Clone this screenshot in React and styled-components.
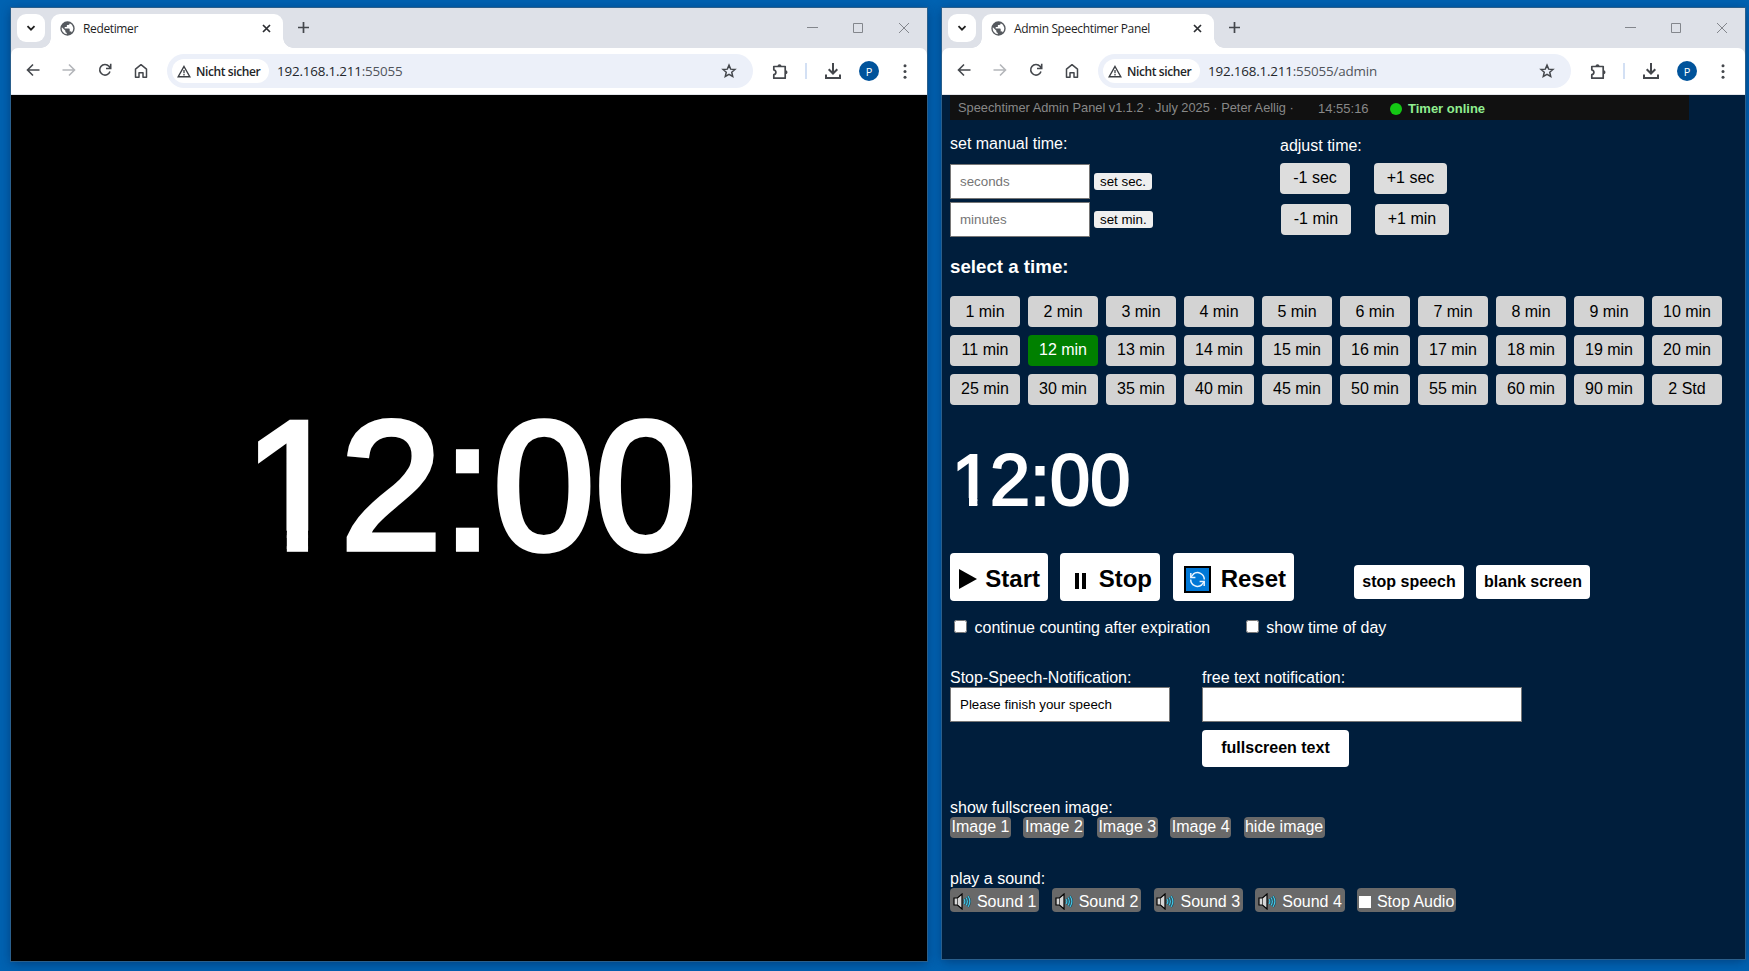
import React from "react";
import styled, { createGlobalStyle, css } from "styled-components";

const Global = createGlobalStyle`
  html, body { margin: 0; padding: 0; }
  body { overflow: hidden; font-family: "Liberation Sans", Arial, sans-serif; }
  *, *::before, *::after { box-sizing: border-box; }
  button, input { font-family: inherit; margin: 0; }
  svg { display: block; flex: none; }
`;

const uiFont = css`font-family: "Open Sans", "Noto Sans", sans-serif;`;

/* ---------- desktop and windows ---------- */

const Desktop = styled.main`
  position: relative;
  width: 1749px;
  height: 971px;
  background: #0062b1;
  overflow: hidden;
`;

const Window = styled.section`
  position: absolute;
  left: ${(p) => p.$left}px;
  top: 8px;
  width: ${(p) => p.$width}px;
  height: ${(p) => p.$height}px;
  display: flex;
  flex-direction: column;
  box-shadow: 0 0 0 1px #2a5f8c, 0 2px 10px rgba(0, 20, 60, 0.45);
`;

const TabStrip = styled.header`
  display: flex;
  height: 40px;
  flex: none;
  padding: 6px 0 0 6px;
  background: #dee1e8;
`;

const TabSearch = styled.button`
  width: 28px;
  height: 28px;
  flex: none;
  display: grid;
  place-items: center;
  padding: 0;
  border: 0;
  border-radius: 9px;
  background: #fff;
`;

const Tab = styled.div`
  position: relative;
  display: flex;
  align-items: center;
  width: 232px;
  height: 34px;
  margin-left: 6px;
  padding: 0 12px 6px 9px;
  border-radius: 9px 9px 0 0;
  background: #fff;
  ${uiFont}
  font-size: 12px;
  color: #1f1f1f;
  &::before, &::after {
    content: "";
    position: absolute;
    bottom: 0;
    width: 10px;
    height: 10px;
  }
  &::before { left: -10px; background: radial-gradient(circle at 0 0, transparent 9.5px, #fff 10px); }
  &::after { right: -10px; background: radial-gradient(circle at 100% 0, transparent 9.5px, #fff 10px); }
`;

const TabTitle = styled.span`
  flex: 1;
  margin-left: 8px;
  line-height: 17px;
  white-space: nowrap;
  letter-spacing: -0.36px;
`;

const NewTab = styled.div`
  margin: 8px 0 0 14.5px;
`;

const WindowControls = styled.div`
  display: flex;
  gap: 34px;
  margin: 8px 17px 0 auto;
`;

const Toolbar = styled.nav`
  display: flex;
  align-items: center;
  height: 47px;
  padding: 0 20.5px 0 15px;
  background: #fff;
  border-radius: 7px 7px 0 0;
  border-bottom: 1px solid #e3e5ea;
`;

const ToolbarHolder = styled.div`
  background: #dee1e8;
  flex: none;
`;

const NavIcons = styled.div`
  display: flex;
  gap: 22px;
`;

const AddressBar = styled.div`
  display: flex;
  align-items: center;
  flex: 1;
  height: 34px;
  margin: 0 19px 0 19px;
  padding: 0 16px 0 5px;
  border-radius: 17px;
  background: #ecf0f9;
`;

const SecurityChip = styled.span`
  display: flex;
  align-items: center;
  width: 97px;
  height: 24px;
  padding-left: 5px;
  border-radius: 12px;
  background: #fff;
  ${uiFont}
  font-size: 12px;
  font-weight: 600;
  letter-spacing: -0.4px;
  color: #222427;
  white-space: nowrap;
  gap: 5px;
`;

const Address = styled.span`
  flex: 1;
  margin-left: 8px;
  ${uiFont}
  font-size: 13.4px;
  letter-spacing: -0.18px;
  color: #23262b;
  white-space: nowrap;
`;

const AddressPart = styled.span`
  color: #50545b;
`;

const ToolbarDivider = styled.span`
  width: 2px;
  height: 16px;
  margin: 0 18px 0 16px;
  background: #d3e0f4;
`;

const Avatar = styled.span`
  display: grid;
  place-items: center;
  width: 20px;
  height: 20px;
  margin: 0 23.5px 0 18px;
  border-radius: 50%;
  background: #00539b;
  color: #fff;
  ${uiFont}
  font-size: 11px;
`;

/* ---------- clock digits ---------- */

const ClockDigits = styled.div`
  font-size: ${(p) => p.$size}px;
  line-height: 1.15;
  white-space: nowrap;
  color: #fff;
  -webkit-text-stroke: 0.03em #fff;
`;

/* A "1" without its foot: only the flag and the stem stay visible. */
const FootlessOne = styled.span`
  display: inline-block;
  margin: 0 -0.026em 0 0.026em;
  clip-path: polygon(
    0 0, 100% 0, 100% 0.82em, 0.354em 0.82em, 0.354em 100%, 0.238em 100%, 0.238em 0.82em, 0 0.82em
  );
`;

/* ---------- speech display ---------- */

const Display = styled.div`
  flex: 1;
  display: flex;
  align-items: center;
  justify-content: center;
  padding: 0 3px 84px 0;
  background: #000;
`;

/* ---------- admin panel ---------- */

const Panel = styled.div`
  flex: 1;
  display: flex;
  flex-direction: column;
  align-items: flex-start;
  padding-left: 8px;
  background: #001e3c;
  color: #fff;
  font-size: 16px;
  line-height: 18px;
  white-space: nowrap;
`;

const StatusBar = styled.div`
  display: flex;
  align-items: center;
  width: 739px;
  height: 25px;
  padding: 0 8px;
  background: #111;
  color: #888;
  font-size: 13px;
`;

const VersionText = styled.span`
  width: 360px;
  padding-top: 1px;
  font-size: 12.8px;
`;

const Clock = styled.span`
  width: 72px;
  padding-top: 2px;
`;

const OnlineStatus = styled.span`
  display: flex;
  align-items: center;
  gap: 6px;
  padding-top: 2px;
  font-weight: bold;
  color: #90ee90;
  &::before {
    content: "";
    width: 12px;
    height: 12px;
    border-radius: 50%;
    background: #14c814;
  }
`;

const TimeSettings = styled.div`
  display: flex;
  height: 117px;
`;

const ManualTime = styled.div`
  width: 330px;
  padding-top: 15px;
`;

const ManualRow = styled.div`
  display: flex;
  align-items: center;
  gap: 4px;
  margin-top: ${(p) => p.$top}px;
`;

const TextInput = styled.input`
  display: block;
  width: ${(p) => p.$width}px;
  height: 35px;
  padding: 1px 9px;
  border: 1px solid #767676;
  border-radius: 0;
  background: #fff;
  color: #000;
  font-size: 13.33px;
  outline: 0;
  &::placeholder { color: #757575; }
`;

const SetButton = styled.button`
  height: 17px;
  padding: 0 6px;
  border: 0;
  border-radius: 3px;
  background: #efefef;
  color: #000;
  font-size: 13.33px;
  line-height: 17px;
`;

const AdjustTime = styled.div`
  padding-top: 17px;
`;

const AdjustRow = styled.div`
  display: flex;
  gap: 24px;
  margin: ${(p) => (p.$second ? "10px 0 0 1px" : "8px 0 0 0")};
`;

const AdjustButton = styled.button`
  width: ${(p) => p.$width}px;
  height: 31px;
  padding: 0 0 2px;
  border: 0;
  border-radius: 4px;
  background: #ddd;
  color: #000;
  font-size: 16px;
`;

const SectionTitle = styled.h3`
  margin: 19px 0 18px;
  font-size: 18.72px;
  line-height: 22px;
`;

const PresetGrid = styled.div`
  display: grid;
  grid-template-columns: repeat(10, 70px);
  grid-auto-rows: 31px;
  gap: 8px;
`;

const Preset = styled.button`
  padding: 0 0 1px;
  border: 0;
  border-radius: 4px;
  background: ${(p) => (p.$active ? "#008000" : "#d3d3d3")};
  color: ${(p) => (p.$active ? "#fff" : "#000")};
  font-size: 16px;
  &:nth-child(-n + 10) { padding: 1px 0 0; }
`;

const PanelTime = styled.div`
  height: 82px;
  margin-top: 34px;
`;

const ControlRow = styled.div`
  display: flex;
  margin-top: 32px;
`;

const MainButton = styled.button`
  display: flex;
  align-items: center;
  justify-content: space-between;
  width: ${(p) => p.$width}px;
  height: 48px;
  margin-right: ${(p) => p.$after}px;
  padding: 4px 8px 0 ${(p) => p.$pad}px;
  border: 0;
  border-radius: 4px;
  background: #fff;
  color: #000;
  font-size: 24px;
  font-weight: bold;
`;

const BoldButton = styled.button`
  width: ${(p) => p.$width}px;
  height: ${(p) => p.$height}px;
  margin: ${(p) => p.$margin};
  padding: 0 0 1px;
  border: 0;
  border-radius: 4px;
  background: #fff;
  color: #000;
  font-size: 16px;
  font-weight: bold;
`;

const OptionRow = styled.div`
  display: flex;
  gap: 35.5px;
  margin: 18px 0 0 4px;
`;

const Option = styled.label`
  display: flex;
  align-items: flex-start;
`;

const Checkbox = styled.input`
  width: 13px;
  height: 13px;
  margin: 1px 7.5px 0 0;
`;

const MessageRow = styled.div`
  display: flex;
  gap: 32px;
  margin-top: 32px;
`;

const MessageField = styled.div`
  display: flex;
  flex-direction: column;
  align-items: flex-start;
`;

const MediaGroup = styled.div`
  margin-top: 32px;
`;

const MediaButtons = styled.div`
  display: flex;
  gap: 12.4px;
`;

const MediaButton = styled.button`
  display: flex;
  align-items: center;
  justify-content: center;
  gap: 6px;
  width: ${(p) => p.$width}px;
  height: ${(p) => (p.$tall ? 24 : 21)}px;
  padding: ${(p) => (p.$tall ? "3px 0 0" : "0 0 2px")};
  border: 0;
  border-radius: 4px;
  background: #696969;
  color: #fff;
  font-size: 16px;
  line-height: 18px;
  white-space: nowrap;
`;

/* ---------- icons ---------- */

const Stroke = ({ size = 14, w = 1.6, color = "#44474c", d, box = 14 }) => (
  <svg width={size} height={size} viewBox={`0 0 ${box} ${box}`} fill="none" stroke={color} strokeWidth={w}>
    <path d={d} />
  </svg>
);

const Globe = () => (
  <svg width="15" height="15" viewBox="0 0 24 24" fill="#55595e">
    <path d="M12 .5a11.500 11.500 0 1 0 0 23 11.500 11.500 0 0 0 0-23zm-1.200 20.700A9.300 9.300 0 0 1 3 9.800l5.600 5.600v1.200c0 1.300 1 2.300 2.200 2.300zm8-3a2.300 2.300 0 0 0-2.200-1.600h-1.100v-3.400c0-.7-.5-1.200-1.200-1.200H7.500V9.700h2.300c.7 0 1.200-.5 1.200-1.100V6.300h2.300c1.200 0 2.200-1 2.200-2.300v-.6a9.300 9.300 0 0 1 3.300 14.800z" />
  </svg>
);

const Home = () => (
  <svg width="14" height="16" viewBox="0 0 14 16" fill="none" stroke="#44474c" strokeWidth="1.500" strokeLinejoin="round">
    <path d="M1.500 6.200 7 1.700l5.500 4.500v8h-3.500v-4.500H5v4.500H1.500z" />
  </svg>
);

const Warning = () => (
  <svg width="14" height="13" viewBox="0 0 14 13" fill="none" stroke="#3b3e43" strokeWidth="1.400">
    <path d="M7 1.500 12.800 11.700H1.200z" />
    <path d="M7 5v3.200M7 9.100v1.300" strokeWidth="1.300" />
  </svg>
);

const Star = () => (
  <svg width="16" height="16" viewBox="0 0 24 24" fill="none" stroke="#44474c" strokeWidth="2.200">
    <path d="M12 3.200l2.500 6 6.500.5-4.900 4.200 1.500 6.300L12 16.900l-5.600 3.300 1.500-6.300L3 9.700l6.500-.5z" />
  </svg>
);

const Puzzle = () => (
  <svg width="17" height="17" viewBox="0 0 17 17" fill="none">
    <path d="M1.800 3.500h11.400v11.700H1.800v-3.500c2.800-.2 2.800-4.500 0-4.700z" stroke="#44474c" strokeWidth="1.700" strokeLinejoin="round" />
    <path d="M5.500 3.200a2 2 0 0 1 4 0zM13.500 7.300a2 2 0 0 1 0 4z" fill="#44474c" />
  </svg>
);

const Download = () => (
  <svg width="16" height="16" viewBox="0 0 16 16" fill="none" stroke="#44474c" strokeWidth="2">
    <path d="M8 0v10M3.700 6.200 8 10.500l4.300-4.300M1 11.500V15h14v-3.500" />
  </svg>
);

const Dots = () => (
  <svg width="4" height="15" viewBox="0 0 4 15" fill="#44474c">
    <circle cx="2" cy="1.800" r="1.500" /><circle cx="2" cy="7.500" r="1.500" /><circle cx="2" cy="13.200" r="1.500" />
  </svg>
);

const PlayGlyph = () => (
  <svg width="18" height="20" viewBox="0 0 18 20"><path d="M0 0 18 10 0 20z" /></svg>
);

const PauseGlyph = () => (
  <svg width="11" height="20" viewBox="0 0 11 20"><path d="M0 4h4v16H0zM7 4h4v16H7z" /></svg>
);

const ResetGlyph = () => (
  <svg width="27" height="27" viewBox="0 0 27 27">
    <rect width="27" height="27" />
    <rect x="2" y="2" width="23" height="23" fill="#0078d7" />
    <g fill="none" stroke="#e9f4ff" strokeWidth="1.500">
      <path d="M9.200 8.200a6.800 6.800 0 0 1 11.100 5.300M17.800 18.800a6.800 6.800 0 0 1-11.100-5.300" />
      <path d="M6.800 7v4.400h4.600M20.200 20v-4.400h-4.600" />
      <path d="M6.800 11.400 9.600 7.900M20.200 15.600l-2.800 3.500" />
    </g>
  </svg>
);

const SpeakerGlyph = () => (
  <svg width="18" height="17" viewBox="0 0 18 17" fill="none">
    <path d="M1 5h3.500L9 1v15l-4.500-4H1z" fill="#d6d6d6" stroke="#000" strokeWidth="1.200" />
    <path d="M4.500 5v7" stroke="#333" strokeWidth=".8" />
    <path d="M11 6q1.700 2.500 0 5M13 4.500q2.700 4 0 8M15 3q3.700 5.500 0 11" stroke="#0c3a4a" strokeWidth="2" />
    <path d="M11 6q1.700 2.500 0 5M13 4.500q2.700 4 0 8M15 3q3.700 5.500 0 11" stroke="#48c8e8" strokeWidth="1.200" />
  </svg>
);

const StopGlyph = () => (
  <svg width="12" height="12" viewBox="0 0 12 12"><rect width="12" height="12" fill="#fff" /></svg>
);

/* ---------- page ---------- */

function BrowserWindow({ left, width, height, title, path, children }) {
  return (
    <Window $left={left} $width={width} $height={height}>
      <TabStrip>
        <TabSearch><Stroke size={10} box={10} w={1.8} color="#1f1f1f" d="M1.500 3.200 5 6.700l3.500-3.500" /></TabSearch>
        <Tab>
          <Globe />
          <TabTitle>{title}</TabTitle>
          <Stroke size={9} box={9} w={1.7} color="#2b2d31" d="M1 1l7 7M8 1l-7 7" />
        </Tab>
        <NewTab><Stroke size={11} box={11} w={1.7} d="M5.500 0v11M0 5.500h11" /></NewTab>
        <WindowControls>
          <Stroke size={12} box={12} w={1} color="#83868c" d="M1 5.500h11" />
          <Stroke size={12} box={12} w={1} color="#83868c" d="M1.500 1.500h9v9h-9z" />
          <Stroke size={12} box={12} w={1} color="#83868c" d="M1 1l10 10M11 1 1 11" />
        </WindowControls>
      </TabStrip>
      <ToolbarHolder>
        <Toolbar>
          <NavIcons>
            <Stroke d="M13.500 7H2M7 1.500 1.500 7 7 12.500" />
            <Stroke color="#b4b6ba" d="M.5 7H12M7 1.500 12.500 7 7 12.500" />
            <Stroke d="M12 8.500A5.300 5.300 0 1 1 11 3.300L12.300 5M12.700 .8v4.700H8" />
            <Home />
          </NavIcons>
          <AddressBar>
            <SecurityChip><Warning />Nicht sicher</SecurityChip>
            <Address>192.168.1.211<AddressPart>:55055{path}</AddressPart></Address>
            <Star />
          </AddressBar>
          <Puzzle />
          <ToolbarDivider />
          <Download />
          <Avatar>P</Avatar>
          <Dots />
        </Toolbar>
      </ToolbarHolder>
      {children}
    </Window>
  );
}

const TwelveMinutes = ({ size }) => (
  <ClockDigits $size={size}><FootlessOne>1</FootlessOne>2:00</ClockDigits>
);

const presets = [
  ...Array.from({ length: 20 }, (_, i) => `${i + 1} min`),
  "25 min", "30 min", "35 min", "40 min", "45 min", "50 min", "55 min", "60 min", "90 min", "2 Std",
];

export default function App() {
  return (
    <Desktop>
      <Global />
      <BrowserWindow left={11} width={916} height={953} title="Redetimer" path="">
        <Display><TwelveMinutes size={183} /></Display>
      </BrowserWindow>

      <BrowserWindow left={942} width={803} height={951} title="Admin Speechtimer Panel" path="/admin">
        <Panel>
          <StatusBar>
            <VersionText>Speechtimer Admin Panel v1.1.2 · July 2025 · Peter Aellig ·</VersionText>
            <Clock>14:55:16</Clock>
            <OnlineStatus>Timer online</OnlineStatus>
          </StatusBar>

          <TimeSettings>
            <ManualTime>
              set manual time:
              <ManualRow $top={11}>
                <TextInput $width={140} placeholder="seconds" />
                <SetButton>set sec.</SetButton>
              </ManualRow>
              <ManualRow $top={3}>
                <TextInput $width={140} placeholder="minutes" />
                <SetButton>set min.</SetButton>
              </ManualRow>
            </ManualTime>
            <AdjustTime>
              adjust time:
              <AdjustRow>
                <AdjustButton $width={70}>-1 sec</AdjustButton>
                <AdjustButton $width={73}>+1 sec</AdjustButton>
              </AdjustRow>
              <AdjustRow $second>
                <AdjustButton $width={70}>-1 min</AdjustButton>
                <AdjustButton $width={74}>+1 min</AdjustButton>
              </AdjustRow>
            </AdjustTime>
          </TimeSettings>

          <SectionTitle>select a time:</SectionTitle>
          <PresetGrid>
            {presets.map((label) => (
              <Preset key={label} $active={label === "12 min"}>{label}</Preset>
            ))}
          </PresetGrid>

          <PanelTime><TwelveMinutes size={72} /></PanelTime>

          <ControlRow>
            <MainButton $width={98} $pad={9} $after={12}><PlayGlyph />Start</MainButton>
            <MainButton $width={100} $pad={15} $after={13}><PauseGlyph />Stop</MainButton>
            <MainButton $width={121} $pad={11} $after={60}><ResetGlyph />Reset</MainButton>
            <BoldButton $width={110} $height={34} $margin="12px 12px 0 0">stop speech</BoldButton>
            <BoldButton $width={114} $height={34} $margin="12px 0 0">blank screen</BoldButton>
          </ControlRow>

          <OptionRow>
            <Option><Checkbox type="checkbox" />continue counting after expiration</Option>
            <Option><Checkbox type="checkbox" />show time of day</Option>
          </OptionRow>

          <MessageRow>
            <MessageField>
              Stop-Speech-Notification:
              <TextInput $width={220} defaultValue="Please finish your speech" />
            </MessageField>
            <MessageField>
              free text notification:
              <TextInput $width={320} />
              <BoldButton $width={147} $height={37} $margin="8px 0 0">fullscreen text</BoldButton>
            </MessageField>
          </MessageRow>

          <MediaGroup>
            show fullscreen image:
            <MediaButtons>
              {["Image 1", "Image 2", "Image 3", "Image 4"].map((label) => (
                <MediaButton key={label} $width={61}>{label}</MediaButton>
              ))}
              <MediaButton $width={81}>hide image</MediaButton>
            </MediaButtons>
          </MediaGroup>

          <MediaGroup>
            play a sound:
            <MediaButtons>
              {["Sound 1", "Sound 2", "Sound 3", "Sound 4"].map((label) => (
                <MediaButton key={label} $width={89.4} $tall><SpeakerGlyph />{label}</MediaButton>
              ))}
              <MediaButton $width={99} $tall><StopGlyph />Stop Audio</MediaButton>
            </MediaButtons>
          </MediaGroup>
        </Panel>
      </BrowserWindow>
    </Desktop>
  );
}
